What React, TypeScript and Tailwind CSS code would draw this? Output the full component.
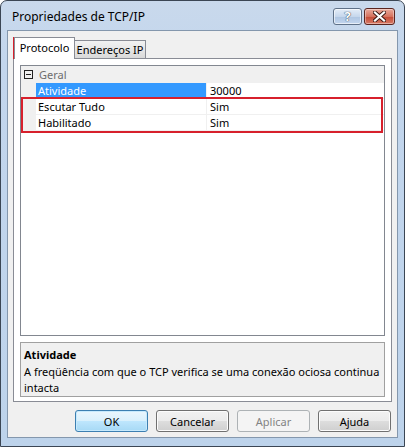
import React from "react"

const font = { fontFamily: '"Noto Sans", "Open Sans", sans-serif' }

function HelpButton() {
  return (
    <div className="flex h-[17px] w-[29px] items-center justify-center rounded-[3px] border border-[#5f7188] bg-[linear-gradient(#e4edf8,#c6d7ec_50%,#aec5e2_51%,#c3d6ee)] shadow-[inset_0_0_0_1px_rgba(255,255,255,0.6)]">
      <span className="text-[13px] font-bold leading-none text-white [text-shadow:0_0_1px_#2c3e55,0_0_1px_#2c3e55]">?</span>
    </div>
  )
}

function CloseButton() {
  return (
    <div className="flex h-[17px] w-[31px] items-center justify-center rounded-[3px] border border-[#5a2520] bg-[linear-gradient(#e9a99b,#d6735f_50%,#c44a35_51%,#d77a66)] shadow-[inset_0_0_0_1px_rgba(255,255,255,0.4)]">
      <svg width="13" height="11" viewBox="0 0 13 11">
        <path d="M2 1.5 L11 9.5 M11 1.5 L2 9.5" stroke="#3a1a16" strokeWidth="4" strokeLinecap="square" />
        <path d="M2 1.5 L11 9.5 M11 1.5 L2 9.5" stroke="#ffffff" strokeWidth="2.2" strokeLinecap="square" />
      </svg>
    </div>
  )
}

function CollapseBox() {
  return (
    <div className="ml-[2px] flex h-[9px] w-[9px] items-center justify-center border border-[#222]">
      <div className="h-px w-[5px] bg-[#222]" />
    </div>
  )
}

type Row = { name: string; value: string; selected?: boolean }

const rows: Row[] = [
  { name: "Atividade", value: "30000", selected: true },
  { name: "Escutar Tudo", value: "Sim" },
  { name: "Habilitado", value: "Sim" },
]

function PropertyRow({ row }: { row: Row }) {
  return (
    <div className="flex h-[16px] border-b border-[#f0f0f0]">
      <div className="w-[15px] shrink-0 bg-[#f0f0f0]" />
      <div
        className={
          row.selected
            ? "flex w-[171px] shrink-0 items-center border-r border-[#f0f0f0] bg-[#3399ff] pl-[2px] text-white"
            : "flex w-[171px] shrink-0 items-center border-r border-[#f0f0f0] pl-[2px] text-black"
        }
      >
        {row.name}
      </div>
      <div className="flex items-center pl-[3px] text-black">{row.value}</div>
    </div>
  )
}

function Button({
  label,
  primary,
  disabled,
}: {
  label: string
  primary?: boolean
  disabled?: boolean
}) {
  if (primary)
    return (
      <div className="flex h-[22px] w-[73px] items-center justify-center rounded-[3px] border border-[#3c7fb1] bg-[linear-gradient(#eaf6fd,#d9f0fc_50%,#bee6fd_51%,#a7d9f5)] text-black shadow-[inset_0_0_0_1px_#c7eafd]">
        {label}
      </div>
    )
  if (disabled)
    return (
      <div className="flex h-[22px] w-[73px] items-center justify-center rounded-[3px] border border-[#adb2b5] bg-[#f4f4f4] text-[#838383]">
        {label}
      </div>
    )
  return (
    <div className="flex h-[22px] w-[73px] items-center justify-center rounded-[3px] border border-[#707070] bg-[linear-gradient(#f2f2f2,#ebebeb_50%,#dddddd_51%,#cfcfcf)] text-black shadow-[inset_0_0_0_1px_#fcfcfc]">
      {label}
    </div>
  )
}

export default function App() {
  return (
    <div
      className="relative flex h-[447px] w-[405px] flex-col overflow-hidden rounded-t-[7px] border border-[#3b4654] bg-[linear-gradient(#c9d9ec,#c3d6ed_60px,#bdd3eb)] text-[11px] leading-none"
      style={font}
    >
      {/* title bar */}
      <div className="flex h-[29px] shrink-0 items-center justify-between pl-[11px] pr-[9px]">
        <span className="pt-[2px] text-[12px] text-black">Propriedades de TCP/IP</span>
        <div className="flex gap-[2px] pt-[1px]">
          <HelpButton />
          <CloseButton />
        </div>
      </div>

      {/* client area */}
      <div className="mx-[6px] mb-[8px] flex flex-1 flex-col border border-[#8497ad] bg-[#f0f0f0] px-[5px] pt-[6px]">
        {/* tabs */}
        <div className="flex h-[21px] items-end pl-[1px]">
          <div className="relative z-10 -mb-px flex h-[22px] w-[61px] items-center justify-center border border-b-0 border-[#898c95] bg-white pb-[2px] text-black">
            Protocolo
          </div>
          <div className="flex h-[18px] w-[71px] items-center justify-center whitespace-nowrap border border-l-0 border-b-0 border-[#898c95] bg-[linear-gradient(#f2f2f2,#e6e6e6_50%,#d9d9d9)] text-black">
            Endereços IP
          </div>
        </div>

        {/* tab pane */}
        <div className="flex h-[344px] flex-col border border-[#898c95] bg-white px-[6px] pt-[6px]">
          <div className="h-[271px] border border-[#828790] bg-white">
            <div className="flex h-[17px] items-center gap-[6px] bg-[#f0f0f0] pl-[1px]">
              <CollapseBox />
              <span className="text-[#6d6d6d]">Geral</span>
            </div>
            {rows.map((r) => (
              <PropertyRow key={r.name} row={r} />
            ))}
          </div>
          <div className="mt-[6px] h-[55px] border border-[#a0a0a0] bg-[#f0f0f0] px-[3px] pt-[4px]">
            <div className="font-bold leading-[15px] text-black">Atividade</div>
            <div className="mt-[2px] leading-[16px] text-black">
              A freqüência com que o TCP verifica se uma conexão ociosa continua intacta
            </div>
          </div>
        </div>

        {/* buttons */}
        <div className="mt-[8px] flex justify-end gap-[8px] pr-[1px]">
          <Button label="OK" primary />
          <Button label="Cancelar" />
          <Button label="Aplicar" disabled />
          <Button label="Ajuda" />
        </div>
      </div>

      {/* annotation boxes */}
      <div className="absolute left-[12px] top-[36px] h-[22px] w-[62px] border-2 border-[#d7202c]" />
      <div className="absolute left-[20px] top-[96px] h-[36px] w-[362px] border-2 border-[#d7202c]" />
    </div>
  )
}
